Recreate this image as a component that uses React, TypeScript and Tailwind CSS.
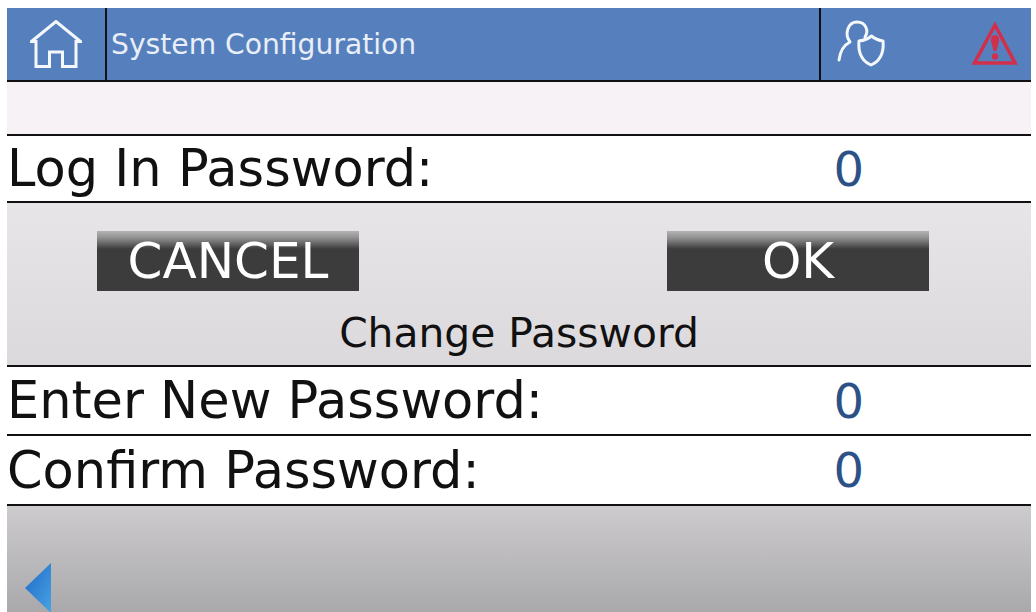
const font = { fontFamily: '"DejaVu Sans", sans-serif' };

function HomeIcon() {
  return (
    <svg width="52" height="48" viewBox="0 0 52 48" fill="none" stroke="#f4f7fb" strokeWidth="3" strokeLinejoin="miter">
      <path d="M1.5 21.5 L26 1.5 L50.5 21.5 L46 21.5 L46 46.5 L32.5 46.5 L32.5 32 L19.5 32 L19.5 46.5 L6 46.5 L6 21.5 Z" />
    </svg>
  );
}

function UserShieldIcon() {
  return (
    <svg width="48" height="48" viewBox="0 0 48 48" fill="none" stroke="#f4f7fb" strokeWidth="3" strokeLinecap="round" strokeLinejoin="round">
      <path d="M2 40 C3 32 7 25 13 22 C7 14 11 2 20 2 C29 2 32 11 28 17" />
      <path d="M34.5 16 C31 19 26 20.5 22 21 C21 32 25 41 34 45 C43 41 47 32 46 21 C42 20.5 38 19 34.5 16 Z" />
    </svg>
  );
}

function AlertIcon() {
  return (
    <svg width="48" height="48" viewBox="0 0 48 48" fill="none">
      <path d="M24 5 L44 43 L3.5 43 Z" stroke="#d12f4b" strokeWidth="3.6" strokeLinejoin="miter" />
      <path d="M24 15 C27 15 28.5 18 28 21 L25.5 31 H22.5 L20 21 C19.5 18 21 15 24 15 Z" fill="#d12f4b" />
      <circle cx="24" cy="36.5" r="3.2" fill="#d12f4b" />
    </svg>
  );
}

function PasswordRow({ label, className }: { label: string; className: string }) {
  return (
    <div className={`flex items-center bg-white border-b-2 border-[#111] ${className}`}>
      <span className="text-[51px] leading-none text-[#111] whitespace-nowrap">{label}</span>
      <span className="ml-auto mr-[167px] text-[48px] leading-none text-[#2b5187]">0</span>
    </div>
  );
}

function DarkButton({ label }: { label: string }) {
  return (
    <div className="w-[262px] h-[60px] flex items-center justify-center bg-[linear-gradient(to_bottom,#b4b3b4_0%,#8f8e8f_12%,#3c3c3c_30%,#3c3c3c_100%)] text-white text-[50px] leading-none">
      {label}
    </div>
  );
}

export default function App() {
  return (
    <div className="w-[1036px] h-[612px] bg-white pl-[7px] pr-[5px] pt-[8px] overflow-hidden" style={font}>
      <div className="h-[604px] flex flex-col">
        {/* Title bar */}
        <header className="h-[74px] shrink-0 flex bg-[#5580bd] border-b-2 border-[#111]">
          <div className="w-[100px] shrink-0 flex items-center justify-center border-r-2 border-[#111]">
            <HomeIcon />
          </div>
          <div className="flex-1 flex items-center pl-[4px] pt-[2px] text-[28.2px] leading-none text-[#e9eef7]">System Configuration</div>
          <div className="w-[212px] shrink-0 flex items-center border-l-2 border-[#111]">
            <div className="ml-[16px]"><UserShieldIcon /></div>
            <div className="ml-auto mr-[12px]"><AlertIcon /></div>
          </div>
        </header>

        <div className="h-[54px] shrink-0 bg-[#f7f2f5] border-b-2 border-[#111]" />
        <PasswordRow label="Log In Password:" className="h-[67px] shrink-0" />

        {/* Action buttons and section heading */}
        <div className="h-[164px] shrink-0 flex flex-col border-b-2 border-[#111] bg-[linear-gradient(to_bottom,#e8e5e8,#dcd9dc)]">
          <div className="flex justify-between pl-[90px] pr-[102px] pt-[28px]">
            <DarkButton label="CANCEL" />
            <DarkButton label="OK" />
          </div>
          <div className="mt-[22px] text-center text-[40.8px] leading-none text-[#111]">Change Password</div>
        </div>

        <PasswordRow label="Enter New Password:" className="h-[69px] shrink-0" />
        <PasswordRow label="Confirm Password:" className="h-[70px] shrink-0" />

        {/* Footer with back arrow */}
        <div className="flex-1 flex items-end bg-[linear-gradient(to_bottom,#cdcbcd,#a9a8ab)]">
          <svg width="26" height="50" viewBox="0 0 26 50" className="ml-[18px]">
            <defs>
              <linearGradient id="arrowFill" x1="0" y1="0" x2="1" y2="1">
                <stop offset="0" stopColor="#1c69c4" />
                <stop offset="1" stopColor="#4aa3e4" />
              </linearGradient>
            </defs>
            <path d="M26 1 V51 L0 26 Z" fill="url(#arrowFill)" />
          </svg>
        </div>
      </div>
    </div>
  );
}
